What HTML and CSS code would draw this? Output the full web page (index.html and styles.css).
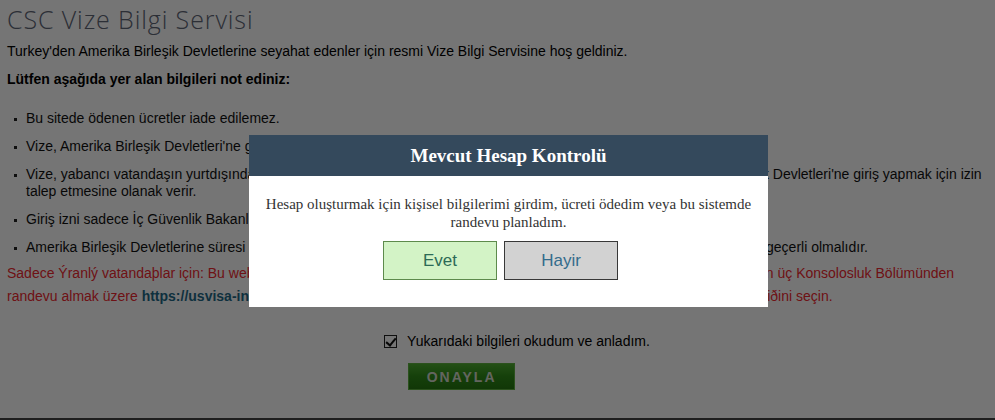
FILE: index.html
```html
<!DOCTYPE html>
<html>
	<head>
		<meta name="viewport" content="width=device-width, initial-scale=1.0">
		<title>CSC Vize Bilgi Servisi</title>
		<link rel="stylesheet" href="styles.css">
	</head>
	<body>
	<div class="page_body">
		<h1 class="site_title">CSC Vize Bilgi Servisi</h1>
		<p class="intro">Turkey'den Amerika Birleşik Devletlerine seyahat edenler için resmi Vize Bilgi Servisine hoş geldiniz.</p>
		<p class="intro bold_line">Lütfen aşağıda yer alan bilgileri not ediniz:</p>

		<ul class="notes">
			<li>Bu sitede ödenen ücretler iade edilemez.</li>
			<li>Vize, Amerika Birleşik Devletleri'ne giriş garantisi vermez, yalnızca giriş limanına seyahat izni sağlar.</li>
			<li>Vize, yabancı vatandaşın yurtdışından bir ABD giriş limanına seyahat ederek oradaki sınır görevlilerden Amerika Birleşik Devletleri'ne giriş yapmak için izin talep etmesine olanak verir.</li>
			<li>Giriş izni sadece İç Güvenlik Bakanlığı yetkilileri tarafından giriş limanında verilebilir.</li>
			<li>Amerika Birleşik Devletlerine süresi dolmamış bir pasaport ile seyahat edilmeli, ve pasaportunuz dönüşten en az altı ay geçerli olmalıdır.</li>
		</ul>

		<p class="warning">Sadece Ýranlý vatandaþlar için: Bu web sitesini kullanarak Türkiye'deki resmi ABD Büyükelçiliği ve iki Konsolosluktan birinin üç Konsolosluk Bölümünden randevu almak üzere <a class="warning_link" href="#">https://usvisa-info.com</a> adresine giriş yaparak ülkenizi ve randevu şehrinizi de belirleyerek tercih ettiðini seçin.</p>

		<div class="agree_row">
			<label class="agree_label"><input type="checkbox" class="agree_box" checked> Yukarıdaki bilgileri okudum ve anladım.</label>
			<button type="button" class="green_button">ONAYLA</button>
		</div>
	</div>

	<div class="dim_layer"></div>

	<div class="account_dialog">
		<div class="dialog_head">Mevcut Hesap Kontrolü</div>
		<div class="dialog_text">Hesap oluşturmak için kişisel bilgilerimi girdim, ücreti ödedim veya bu sistemde randevu planladım.</div>
		<div class="dialog_buttons">
			<button type="button" class="yes_button">Evet</button>
			<button type="button" class="no_button">Hayir</button>
		</div>
	</div>
	</body>
</html>
```

FILE: styles.css
```css
	body
	{
		margin: 0;
		background: #ffffff;
		font-family: 'Liberation Sans', Arial, sans-serif;
		font-size: 14px;
		color: #000;
		height: 420px;
		overflow: hidden;
	}
	.page_body
	{
		padding: 0 7px 0 7px;
		height: 418px;
		border-bottom: 2px solid #444;
	}
	.site_title
	{
		font-family: 'Century Gothic', 'Open Sans', sans-serif;
		font-weight: 300;
		font-size: 25px;
		letter-spacing: 0.9px;
		color: #606676;
		margin: 0;
		padding-top: 3px;
		line-height: 33px;
	}
	.intro
	{
		margin: 6px 0 0 0;
		line-height: 18px;
	}
	.bold_line
	{
		font-weight: bold;
		margin-top: 10px;
	}
	.notes
	{
		margin: 22px 0 0 0;
		padding: 0 0 0 19px;
		list-style: none;
	}
	.notes li
	{
		position: relative;
		line-height: 17px;
		margin-bottom: 11px;
		color: #111;
	}
	.notes li:before
	{
		content: "";
		position: absolute;
		left: -12px;
		top: 8px;
		width: 3px;
		height: 3px;
		background: #222;
	}
	.warning
	{
		color: #f02830;
		margin: -5px 0 0 0;
		line-height: 23px;
	}
	.warning_link
	{
		color: #1f6a88;
		font-weight: bold;
		text-decoration: none;
	}
	.agree_row
	{
		display: flex;
		flex-direction: column;
		align-items: flex-start;
		width: fit-content;
		margin: 24px auto 0 auto;
		padding-left: 39px;
	}
	.agree_label
	{
		display: flex;
		align-items: center;
		line-height: 18px;
		font-size: 14px;
	}
	.agree_box
	{
		appearance: none;
		-webkit-appearance: none;
		position: relative;
		width: 13px;
		height: 13px;
		margin: 0 10px 0 0;
		border: 1px solid #222;
		background: #fff;
	}
	.agree_box:checked:after
	{
		content: "";
		position: absolute;
		left: 3px;
		top: 0px;
		width: 4px;
		height: 8px;
		border: solid #111;
		border-width: 0 2px 2px 0;
		transform: rotate(40deg);
	}
	.green_button
	{
		margin: 13px 0 0 24px;
		width: 107px;
		height: 27px;
		border: 1px solid #5fb040;
		background: linear-gradient(#4eae30, #2f8c18 50%, #267810);
		color: #d8dcd0;
		font-family: 'Liberation Sans', Arial, sans-serif;
		font-weight: bold;
		font-size: 14px;
		letter-spacing: 2px;
	}
	.dim_layer
	{
		position: fixed;
		left: 0;
		top: 0;
		right: 0;
		bottom: 0;
		background: rgba(0, 0, 0, 0.54);
	}
	.account_dialog
	{
		position: absolute;
		left: 249px;
		top: 135px;
		width: 519px;
		height: 172px;
		background: #fff;
	}
	.dialog_head
	{
		background: #34495c;
		color: #fff;
		height: 41px;
		line-height: 41px;
		text-align: center;
		font-family: 'Liberation Serif', 'Times New Roman', serif;
		font-weight: bold;
		font-size: 19px;
	}
	.dialog_text
	{
		font-family: 'Liberation Serif', 'Times New Roman', serif;
		font-size: 15px;
		line-height: 18px;
		color: #333;
		text-align: center;
		padding: 19px 12px 0 12px;
	}
	.dialog_buttons
	{
		display: flex;
		justify-content: center;
		gap: 7px;
		margin-top: 10px;
		padding-right: 16px;
	}
	.yes_button, .no_button
	{
		width: 114px;
		height: 39px;
		font-family: 'Liberation Sans', Arial, sans-serif;
		font-size: 17px;
	}
	.yes_button
	{
		background: #d3f3c6;
		border: 1px solid #5d8a4c;
		color: #2d6a56;
	}
	.no_button
	{
		background: #d2d2d2;
		border: 1px solid #383838;
		color: #346c8c;
	}
```
